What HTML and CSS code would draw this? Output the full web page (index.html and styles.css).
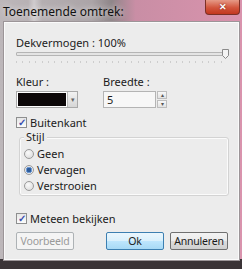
FILE: index.html
```html
<!DOCTYPE html>
<html lang="nl">
<head>
  <meta charset="UTF-8">
  <title>Toenemende omtrek</title>
  <link rel="stylesheet" href="styles.css">
</head>
<body>
  <div class="window">
    <div class="titlebar">
      <span class="title">Toenemende omtrek:</span>
      <span class="close">&#x2715;</span>
    </div>
    <div class="client">
      <div class="label top-label">Dekvermogen : 100%</div>
      <div class="slider">
        <div class="track"></div>
        <svg class="thumb" width="7" height="10" viewBox="0 0 7 10">
          <path d="M0.5 0.5 H6.5 V6.5 L3.5 9.5 L0.5 6.5 Z" fill="#f4f4f4" stroke="#8a8a8a"/>
        </svg>
      </div>
      <div class="ticks"></div>

      <div class="row">
        <div class="field">
          <div class="label">Kleur :</div>
          <div class="colorpick">
            <div class="swatch"></div>
            <div class="drop">&#x25BE;</div>
          </div>
        </div>
        <div class="field">
          <div class="label">Breedte :</div>
          <div class="spin">
            <div class="spin-input">5</div>
            <div class="spin-btns">
              <span class="spin-btn">&#x25B4;</span>
              <span class="spin-btn">&#x25BE;</span>
            </div>
          </div>
        </div>
      </div>

      <div class="check first-check"><span class="box">&#x2713;</span>Buitenkant</div>

      <div class="group">
        <span class="legend">Stijl</span>
        <div class="radio"><span class="dot"></span>Geen</div>
        <div class="radio"><span class="dot on"></span>Vervagen</div>
        <div class="radio"><span class="dot"></span>Verstrooien</div>
      </div>

      <div class="check"><span class="box">&#x2713;</span>Meteen bekijken</div>

      <div class="buttons">
        <span class="btn disabled">Voorbeeld</span>
        <span class="spacer"></span>
        <span class="btn default">Ok</span>
        <span class="btn">Annuleren</span>
      </div>
    </div>
  </div>
</body>
</html>
```

FILE: styles.css
```css
body {
  margin: 0;
  width: 242px;
  height: 269px;
  overflow: hidden;
  font-family: 'Segoe UI', 'Noto Sans', sans-serif;
  font-size: 11px;
  color: #1b1b1b;
}
.window {
  height: 269px;
  display: flex;
  flex-direction: column;
  background:
    linear-gradient(90deg, rgba(255,255,255,0) 28px, rgba(255,255,255,0.35) 34px, rgba(255,255,255,0) 42px),
    linear-gradient(90deg, #bdb7ba 0%, #aba4a7 38%, #8f8689 46%, #c98ea5 56%, #d993ad 100%);
  box-shadow: inset 0 -10px 0 #3b3437;
}
.titlebar {
  height: 22px;
  display: flex;
  justify-content: space-between;
  align-items: flex-start;
  flex-shrink: 0;
}
.title {
  padding: 3px 0 0 3px;
  font-size: 12px;
  color: #111;
  text-shadow: 0 0 6px rgba(255,255,255,0.9);
}
.close {
  width: 35px;
  height: 15px;
  margin-right: 2px;
  box-sizing: border-box;
  border: 1px solid #7b3026;
  border-top: none;
  border-radius: 0 0 4px 4px;
  background: linear-gradient(#e69a87, #d2553d 55%, #c2371f);
  color: #fff;
  font-size: 9px;
  font-weight: bold;
  text-align: center;
  line-height: 14px;
  text-shadow: 0 0 2px #6b1a10;
}
.client {
  flex: 1;
  margin: 0 3px 9px 4px;
  background: #ececec;
  border: 1px solid #fafafa;
  box-shadow: 0 0 0 1px #9c9598;
  padding: 12px 0 0 11px;
  display: flex;
  flex-direction: column;
}
.label {
  line-height: 15px;
  height: 15px;
}
.slider {
  position: relative;
  height: 10px;
  width: 213px;
}
.track {
  margin-top: 2px;
  height: 2px;
  background: #e4e4e4;
  border: 1px solid #b5b5b5;
  border-radius: 1px;
}
.thumb {
  position: absolute;
  right: 0;
  top: -1px;
}
.ticks {
  margin-top: 1px;
  width: 210px;
  height: 2px;
  background: repeating-linear-gradient(90deg, #cdcdcd 0 1px, transparent 1px 6.4px);
}
.row {
  display: flex;
  gap: 25px;
  margin-top: 11px;
}
.field .label {
  margin-bottom: 2px;
}
.colorpick {
  display: flex;
  width: 62px;
  height: 17px;
  border: 1px solid #a9a9a9;
  box-sizing: border-box;
  background: #fff;
}
.swatch {
  flex: 1;
  background: #0c0708;
  margin: 1px;
}
.drop {
  width: 9px;
  background: linear-gradient(#f2f2f2, #d6d6d6);
  border-left: 1px solid #b8b8b8;
  font-size: 7px;
  color: #666;
  text-align: center;
  line-height: 15px;
}
.spin {
  display: flex;
  height: 17px;
}
.spin-input {
  width: 53px;
  box-sizing: border-box;
  border: 1px solid #b4b4b4;
  background: #f7f7f7;
  padding-left: 3px;
  line-height: 15px;
}
.spin-btns {
  display: flex;
  flex-direction: column;
  margin-left: 1px;
}
.spin-btn {
  width: 10px;
  height: 8px;
  box-sizing: border-box;
  border: 1px solid #bdbdbd;
  background: linear-gradient(#f8f8f8, #e2e2e2);
  font-size: 6px;
  line-height: 6px;
  text-align: center;
  color: #555;
}
.spin-btn + .spin-btn {
  margin-top: 1px;
}
.check {
  display: flex;
  align-items: center;
  height: 15px;
  margin-top: 15px;
}
.first-check {
  margin-top: 7px;
}
.box {
  width: 11px;
  height: 11px;
  box-sizing: border-box;
  border: 1px solid #8e8f8f;
  background: linear-gradient(#e6e6e6, #fcfcfc);
  margin-right: 3px;
  font-size: 10px;
  line-height: 9px;
  text-align: center;
  color: #3b4fb0;
  font-weight: bold;
}
.group {
  position: relative;
  margin: 7px 9px 0 3px;
  border: 1px solid #d3d3d3;
  box-shadow: inset 0 0 0 1px #fbfbfb;
  border-radius: 3px;
  height: 59px;
  box-sizing: border-box;
  padding: 8px 0 0 4px;
}
.legend {
  position: absolute;
  top: -9px;
  left: 4px;
  padding: 0 2px;
  background: #ececec;
  line-height: 15px;
}
.radio {
  display: flex;
  align-items: center;
  height: 17px;
  margin-top: -1px;
}
.dot {
  width: 10px;
  height: 10px;
  box-sizing: border-box;
  border: 1px solid #9a9a9a;
  border-radius: 50%;
  background: radial-gradient(circle at 40% 35%, #fafafa, #d7d7d7);
  margin-right: 3px;
}
.dot.on {
  background: radial-gradient(circle, #2d5b9a 0 2px, #6f9bd5 2.5px 3px, #eaeaea 3.5px);
}
.buttons {
  display: flex;
  gap: 6px;
  margin-top: 6px;
  width: 212px;
}
.spacer {
  flex: 1;
}
.btn {
  width: 58px;
  height: 18px;
  box-sizing: border-box;
  border: 1px solid #707070;
  border-radius: 2px;
  background: linear-gradient(#f3f3f3 0%, #ebebeb 50%, #dddddd 51%, #cfcfcf 100%);
  text-align: center;
  line-height: 16px;
  font-size: 10.5px;
  letter-spacing: -0.2px;
}
.btn.default {
  border-color: #3c7fb1;
  background: linear-gradient(#eaf6fd 0%, #d9f0fc 50%, #bee6fd 51%, #a7d9f5 100%);
}
.btn.disabled {
  border-color: #adb2b5;
  background: #f4f4f4;
  color: #9a9a9a;
}
```
